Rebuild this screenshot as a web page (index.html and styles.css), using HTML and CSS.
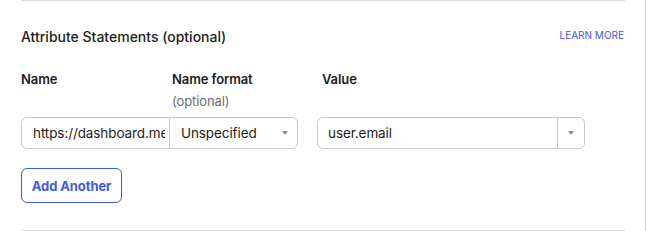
FILE: index.html
```html
<!DOCTYPE html>
<html>
<head>
<meta charset="utf-8">
<link rel="stylesheet" href="styles.css">
</head>
<body>
<div class="panel">
  <div class="rule"></div>
  <div class="header">
    <h2 class="title">Attribute Statements (optional)</h2>
    <a class="learn">LEARN MORE</a>
  </div>
  <div class="labels">
    <div class="label col-name"><span class="lbl">Name</span></div>
    <div class="label col-format"><span class="lbl">Name format</span><span class="hint">(optional)</span></div>
    <div class="label col-value"><span class="lbl">Value</span></div>
  </div>
  <div class="fields">
    <input class="field name-input" type="text" value="https://dashboard.meraki.com/saml/user">
    <div class="field format-select"><span>Unspecified</span><span class="caret"></span></div>
    <div class="field value-combo"><span class="val">user.email</span><span class="combo-btn"><span class="caret"></span></span></div>
  </div>
  <button class="add">Add Another</button>
  <div class="rule bottom"></div>
</div>
</body>
</html>
```

FILE: styles.css
```css
* { box-sizing: border-box; }
html, body { margin: 0; padding: 0; background: #fff; }
body { font-family: Inter, "Noto Sans", sans-serif; color: #1d1d21; }
.panel {
  width: 646px;
  height: 231px;
  border-right: 1px solid #d7d7dc;
  padding: 0 20px 0 21px;
  display: flex;
  flex-direction: column;
  overflow: hidden;
}
.rule { height: 1px; background: #dcdcdf; flex: none; }
.header {
  display: flex;
  justify-content: space-between;
  align-items: center;
  margin-top: 26px;
  height: 20px;
}
.title { margin: 0; font-size: 14px; font-weight: 500; line-height: 20px; }
.learn { font-size: 10px; color: #3f59e4; margin-right: 1px; position: relative; top: -2px; }
.labels { display: flex; margin-top: 22px; }
.label { display: flex; flex-direction: column; font-size: 13px; line-height: 20px; letter-spacing: -0.1px; }
.lbl { font-weight: 600; }
.hint { color: #6e6e78; margin-top: 2px; }
.col-name { width: 151px; }
.col-format { width: 150px; }
.col-value { width: 150px; }
.fields { display: flex; margin-top: 6px; height: 32px; }
.field {
  height: 32px;
  border: 1px solid #c9c9ce;
  display: flex;
  align-items: center;
  font-size: 13.5px;
  letter-spacing: -0.1px;
  color: #1d1d21;
  background: #fff;
}
.name-input {
  width: 149px;
  margin: 0;
  border-radius: 6px 0 0 6px;
  padding: 0 4px 0 11px;
  font-family: Inter, "Noto Sans", sans-serif;
  outline: none;
}
.format-select {
  width: 129px;
  margin-left: -1px;
  border-radius: 0 6px 6px 0;
  padding-left: 11px;
  padding-right: 9px;
  justify-content: space-between;
}
.caret {
  width: 0; height: 0;
  border-left: 3.5px solid transparent;
  border-right: 3.5px solid transparent;
  border-top: 4px solid #8a8a90;
}
.value-combo {
  width: 268px;
  margin-left: 19px;
  border-radius: 6px;
  justify-content: space-between;
}
.val { padding-left: 10px; }
.combo-btn {
  width: 27px;
  height: 100%;
  border-left: 1px solid #c9c9ce;
  display: flex;
  align-items: center;
  justify-content: center;
}
.add {
  align-self: flex-start;
  margin-top: 19px;
  height: 35px;
  width: 101px;
  border: 1px solid #3f59e4;
  border-radius: 6px;
  background: #fff;
  color: #3f59e4;
  font-family: Inter, "Noto Sans", sans-serif;
  font-size: 13px;
  font-weight: 700;
  letter-spacing: -0.1px;
  padding: 0;
}
.bottom { margin-top: 27px; }
```
